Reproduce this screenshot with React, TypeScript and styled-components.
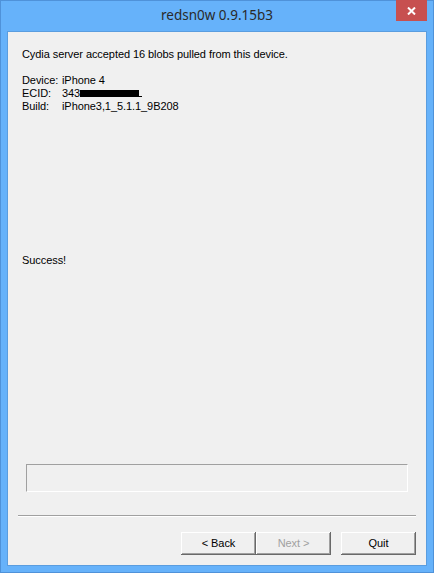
import React from "react";
import styled, { createGlobalStyle } from "styled-components";

const GlobalStyle = createGlobalStyle`
  html, body {
    margin: 0;
    padding: 0;
    background: #ffffff;
  }
`;

const Window = styled.div`
  width: 434px;
  height: 573px;
  box-sizing: border-box;
  border: 1px solid #4f92d9;
  background: #66b2fa;
  display: flex;
  flex-direction: column;
  font-family: "Liberation Sans", Arial, sans-serif;
`;

const TitleBar = styled.div`
  height: 29px;
  display: grid;
  grid-template-columns: 1fr auto 1fr;
  align-items: start;
`;

const Title = styled.div`
  grid-column: 2;
  font-family: "Noto Sans", "Open Sans", sans-serif;
  font-size: 13.5px;
  line-height: 29px;
  color: #2a2a2a;
`;

const CloseButton = styled.div`
  grid-column: 3;
  justify-self: end;
  margin-top: -1px;
  margin-right: 6px;
  width: 31px;
  height: 21px;
  background: #c75050;
  color: #ffffff;
  display: flex;
  align-items: center;
  justify-content: center;
`;

const Client = styled.div`
  flex: 1;
  margin: 1px 6px 6px;
  border: 1px solid #5a9ddf;
  background: #f0f0f0;
  display: flex;
  flex-direction: column;
  font-size: 11px;
  line-height: 13px;
  letter-spacing: -0.07px;
  color: #000000;
`;

const Body = styled.div`
  flex: 1;
  padding: 16px 14px 0;
`;

const Line = styled.div<{ $gap?: number }>`
  margin-top: ${(p) => p.$gap ?? 0}px;
  white-space: pre;
`;

const InfoGrid = styled.div`
  margin-top: 13px;
  display: grid;
  grid-template-columns: 40px auto;
  justify-content: start;
`;

const Redacted = styled.span`
  display: inline-block;
  width: 59px;
  height: 7px;
  background: #000000;
`;

const Tail = styled.span`
  display: inline-block;
  width: 3px;
  height: 1px;
  background: #000000;
`;

const Progress = styled.div`
  height: 28px;
  margin: 0 18px 23px;
  box-sizing: border-box;
  border-top: 1px solid #a0a0a0;
  border-left: 1px solid #a0a0a0;
  border-bottom: 1px solid #ffffff;
  border-right: 1px solid #ffffff;
`;

const Separator = styled.div`
  margin: 0 10px;
  box-sizing: border-box;
  height: 2px;
  border-top: 1px solid #a0a0a0;
  border-bottom: 1px solid #ffffff;
`;

const ButtonRow = styled.div`
  display: flex;
  justify-content: flex-end;
  padding: 15px 10px 10px;
`;

const Button = styled.div<{ $disabled?: boolean; $gap?: number }>`
  width: 75px;
  height: 23px;
  margin-left: ${(p) => p.$gap ?? 0}px;
  box-sizing: border-box;
  background: #f0f0f0;
  box-shadow: inset -1px -1px #696969, inset 1px 1px #ffffff, inset -2px -2px #a0a0a0;
  display: flex;
  align-items: center;
  justify-content: center;
  padding-bottom: 1px;
  color: ${(p) => (p.$disabled ? "#a0a0a0" : "#000000")};
`;

export default function App() {
  return (
    <>
      <GlobalStyle />
      <Window>
        <TitleBar>
          <Title>redsn0w 0.9.15b3</Title>
          <CloseButton>
            <svg width="9" height="8" viewBox="0 0 9 8">
              <path d="M1 0.5 L8 7.5 M8 0.5 L1 7.5" stroke="#ffffff" strokeWidth="2" />
            </svg>
          </CloseButton>
        </TitleBar>
        <Client>
          <Body>
            <Line>Cydia server accepted 16 blobs pulled from this device.</Line>
            <InfoGrid>
              <span>Device:</span>
              <span>iPhone 4</span>
              <span>ECID:</span>
              <span>
                343<Redacted />
                <Tail />
              </span>
              <span>Build:</span>
              <span>iPhone3,1_5.1.1_9B208</span>
            </InfoGrid>
            <Line $gap={141}>Success!</Line>
          </Body>
          <Progress />
          <Separator />
          <ButtonRow>
            <Button>&lt; Back</Button>
            <Button $disabled>Next &gt;</Button>
            <Button $gap={10}>Quit</Button>
          </ButtonRow>
        </Client>
      </Window>
    </>
  );
}
